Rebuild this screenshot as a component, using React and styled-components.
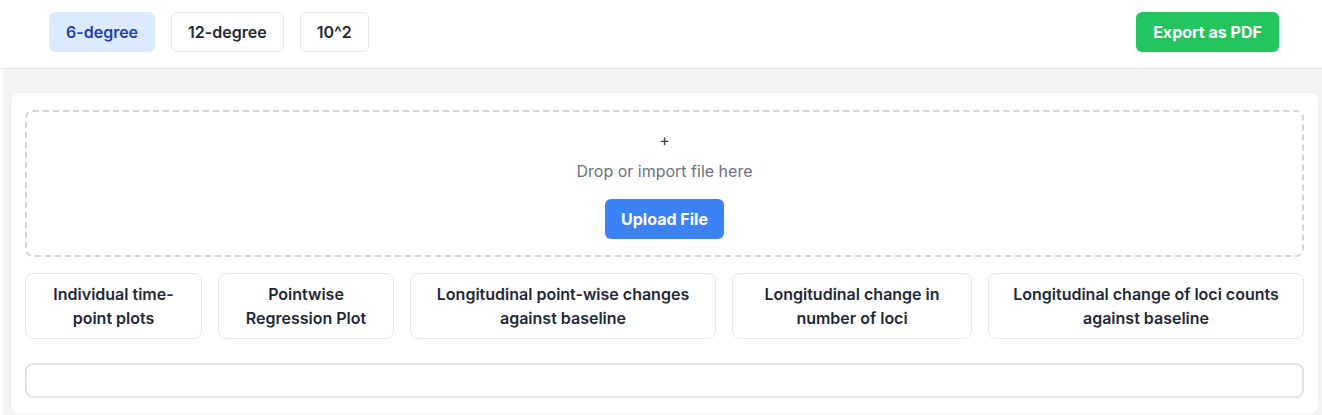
import React from "react";
import styled, { createGlobalStyle } from "styled-components";

const GlobalStyle = createGlobalStyle`
  * { box-sizing: border-box; }
  body {
    margin: 0;
    background: #ffffff;
    font-family: Inter, "Noto Sans", sans-serif;
  }
`;

const Page = styled.div`
  width: 1322px;
  min-height: 415px;
  display: flex;
  flex-direction: column;
`;

const Header = styled.header`
  height: 69px;
  display: flex;
  align-items: flex-start;
  justify-content: space-between;
  padding: 12px 43px 0 49px;
  background: #ffffff;
  border-bottom: 1px solid #e5e7eb;
  box-shadow: 0 1px 2px rgba(0, 0, 0, 0.04);
`;

const Tabs = styled.div`
  display: flex;
  gap: 16px;
`;

const Tab = styled.button`
  height: 40px;
  padding: 0 16px;
  border-radius: 6px;
  font-family: inherit;
  font-size: 16px;
  font-weight: 600;
  cursor: pointer;
  border: 1px solid ${(p) => (p.$active ? "#dbeafe" : "#e5e7eb")};
  background: ${(p) => (p.$active ? "#dbeafe" : "#ffffff")};
  color: ${(p) => (p.$active ? "#1e40af" : "#1f2937")};
`;

const ExportButton = styled.button`
  height: 40px;
  width: 143px;
  border: none;
  border-radius: 6px;
  background: #22c55e;
  color: #ffffff;
  font-family: inherit;
  font-size: 16px;
  font-weight: 700;
  cursor: pointer;
`;

const Main = styled.main`
  flex: 1;
  background: #f3f4f6;
  padding: 24px 4px 2px 8px;
  margin-left: 3px;
`;

const Card = styled.section`
  background: #ffffff;
  border-radius: 8px;
  box-shadow: 0 0 0 1px #eef0f2;
  padding: 17px 14px 16px 14px;
  display: flex;
  flex-direction: column;
`;

const DropZone = styled.div`
  height: 147px;
  border: 2px dashed #d1d5db;
  border-radius: 8px;
  display: flex;
  flex-direction: column;
  align-items: center;
  padding-top: 18px;
`;

const Plus = styled.div`
  font-size: 16px;
  color: #374151;
  line-height: 20px;
`;

const DropText = styled.p`
  margin: 11px 0 0;
  font-size: 16px;
  line-height: 20px;
  color: #6b7280;
`;

const UploadButton = styled.button`
  margin-top: 18px;
  height: 40px;
  width: 119px;
  border: none;
  border-radius: 6px;
  background: #3b82f6;
  color: #ffffff;
  font-family: inherit;
  font-size: 16px;
  font-weight: 700;
  cursor: pointer;
`;

const PlotRow = styled.div`
  margin-top: 16px;
  display: grid;
  grid-template-columns: 177px 176px 306px 240px 1fr;
  gap: 16px;
`;

const PlotButton = styled.button`
  height: 66px;
  border: 1px solid #e5e7eb;
  border-radius: 8px;
  background: #ffffff;
  color: #1f2937;
  font-family: inherit;
  font-size: 16px;
  font-weight: 600;
  line-height: 24px;
  text-align: center;
  padding: 0 16px;
  cursor: pointer;
`;

const Output = styled.div`
  margin-top: 24px;
  height: 35px;
  border: 2px solid #e2e4e7;
  border-radius: 8px;
  background: #ffffff;
`;

const plots = [
  ["Individual time-", "point plots"],
  ["Pointwise", "Regression Plot"],
  ["Longitudinal point-wise changes", "against baseline"],
  ["Longitudinal change in", "number of loci"],
  ["Longitudinal change of loci counts", "against baseline"],
];

export default function App() {
  return (
    <>
      <GlobalStyle />
      <Page>
        <Header>
          <Tabs>
            <Tab $active>6-degree</Tab>
            <Tab>12-degree</Tab>
            <Tab>10^2</Tab>
          </Tabs>
          <ExportButton>Export as PDF</ExportButton>
        </Header>
        <Main>
          <Card>
            <DropZone>
              <Plus>+</Plus>
              <DropText>Drop or import file here</DropText>
              <UploadButton>Upload File</UploadButton>
            </DropZone>
            <PlotRow>
              {plots.map(([a, b]) => (
                <PlotButton key={a}>
                  {a}
                  <br />
                  {b}
                </PlotButton>
              ))}
            </PlotRow>
            <Output />
          </Card>
        </Main>
      </Page>
    </>
  );
}
